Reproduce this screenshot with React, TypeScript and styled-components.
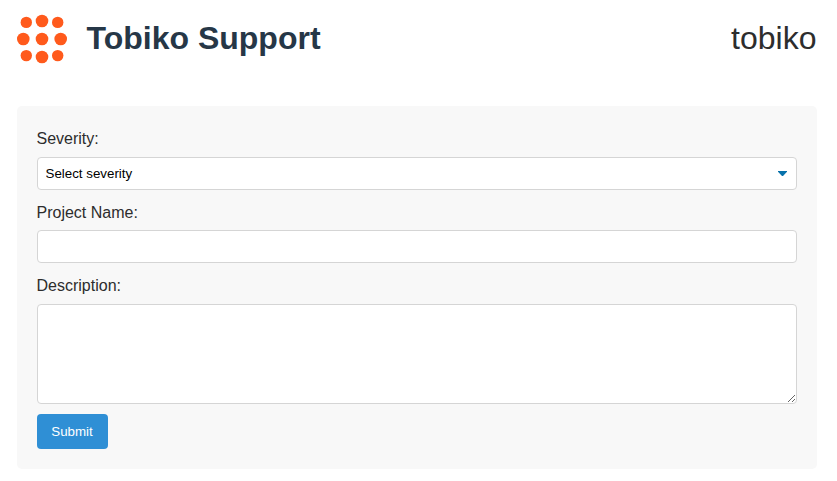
import React from "react";
import styled, { createGlobalStyle } from "styled-components";

const GlobalStyle = createGlobalStyle`
  * { box-sizing: border-box; }
  body { margin: 0; background: #fff; color: #2d2d2d; font-family: "Liberation Sans", Arial, sans-serif; }
`;

const Page = styled.main`
  width: 800px;
  margin: 14px 0 0 17px;
`;
const Header = styled.header`
  display: flex;
  align-items: center;
  height: 50px;
  margin-bottom: 42px;
`;
const Logo = styled.svg`
  width: 50px;
  height: 50px;
  margin-right: 19.5px;
`;
const Title = styled.h1`
  margin: 0 0 2px;
  font-size: 32px;
  line-height: 37px;
  color: #263747;
`;
const Brand = styled.span`
  margin: 0 0.5px 2px auto;
  font-size: 32px;
  line-height: 37px;
`;
const Form = styled.form`
  display: flex;
  flex-direction: column;
  height: 363px;
  padding: 23px 20px 20px;
  background: #f8f8f8;
  border-radius: 5px;
`;
const Label = styled.label<{ $gap?: number }>`
  flex: none;
  margin: 0 0 ${({ $gap = 9 }) => $gap}px -0.5px;
  font-size: 16px;
  line-height: 19px;
`;
const SelectWrap = styled.div`
  display: grid;
  flex: none;
  align-items: center;
  margin-bottom: 13px;
  > * { grid-area: 1 / 1; }
`;
const Select = styled.select`
  appearance: none;
  width: 100%;
  height: 33px;
  padding: 0 7.5px;
  border: 1px solid #d5d5d5;
  border-radius: 4px;
  background: #fff;
  color: #000;
  font: 13.333px "Liberation Sans", Arial, sans-serif;
`;
const Arrow = styled.svg`
  justify-self: end;
  width: 9px;
  height: 5px;
  margin-right: 10px;
  pointer-events: none;
`;
const Input = styled.input`
  flex: none;
  height: 33px;
  margin: 0 0 13px;
  border: 1px solid #d5d5d5;
  border-radius: 4px;
  background: #fff;
`;
const TextArea = styled.textarea`
  flex: none;
  height: 100px;
  margin: 0 0 10px;
  border: 1px solid #d5d5d5;
  border-radius: 4px;
  background: #fff;
  resize: vertical;
`;
const Submit = styled.button`
  flex: none;
  align-self: flex-start;
  width: 71px;
  height: 35px;
  padding: 0 1px 0 0;
  border: 0;
  border-radius: 4px;
  background: #2f8fd5;
  color: #fff;
  font: 13.333px "Liberation Sans", Arial, sans-serif;
`;

const dots = [
  [9.3, 8.4, 5.7], [25, 7, 6.3], [40.7, 8.4, 5.7],
  [6.3, 25, 6.3], [25, 25, 6.3], [43.7, 25, 6.3],
  [9.3, 41.6, 5.7], [25, 43, 6.3], [40.7, 41.6, 5.7],
];

export default function App() {
  return (
    <>
      <GlobalStyle />
      <Page>
        <Header>
          <Logo viewBox="0 0 50 50" aria-hidden="true">
            {dots.map(([cx, cy, r]) => <circle key={`${cx}-${cy}`} cx={cx} cy={cy} r={r} fill="#ff5a1c" />)}
          </Logo>
          <Title>Tobiko Support</Title>
          <Brand>tobiko</Brand>
        </Header>
        <Form onSubmit={(e) => e.preventDefault()}>
          <Label htmlFor="severity">Severity:</Label>
          <SelectWrap>
            <Select id="severity"><option>Select severity</option></Select>
            <Arrow viewBox="0 0 9 5" aria-hidden="true"><path d="M0 0H9V.8L5 5H4L0 .8Z" fill="#0872ab" /></Arrow>
          </SelectWrap>
          <Label htmlFor="project" $gap={8}>Project Name:</Label>
          <Input id="project" />
          <Label htmlFor="description">Description:</Label>
          <TextArea id="description" />
          <Submit>Submit</Submit>
        </Form>
      </Page>
    </>
  );
}
